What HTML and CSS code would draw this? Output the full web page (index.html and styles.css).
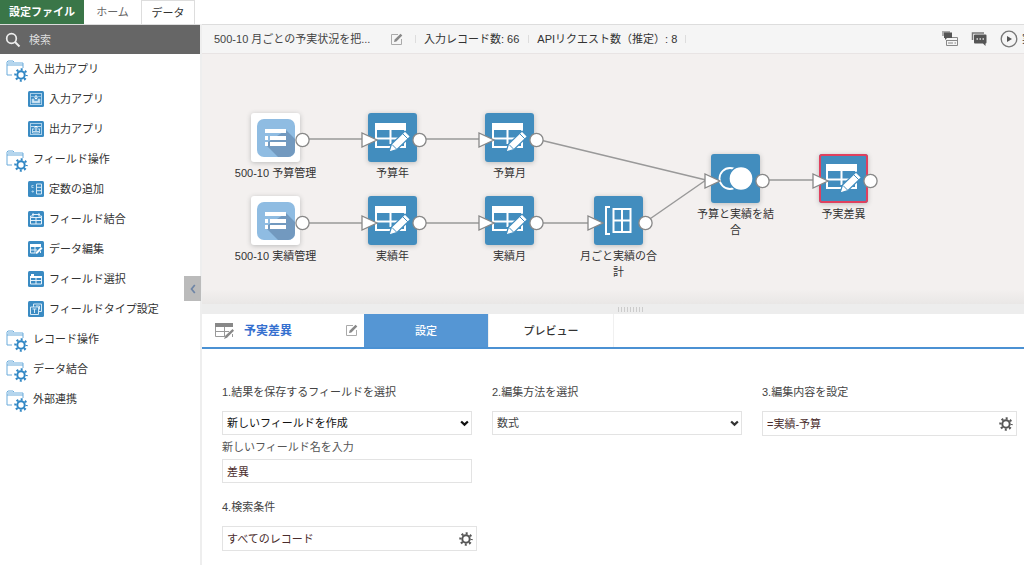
FILE: index.html
```html
<!DOCTYPE html>
<html lang="ja">
<head>
<meta charset="utf-8">
<title>設定ファイル</title>
<link rel="stylesheet" href="styles.css">
</head>
<body>
<svg class="defs" width="0" height="0" aria-hidden="true">
  <symbol id="gear" viewBox="0 0 14 14">
    <circle cx="7" cy="7" r="3.7" fill="none" stroke="currentColor" stroke-width="2"/>
    <circle cx="7" cy="7" r="5.6" fill="none" stroke="currentColor" stroke-width="2.2" stroke-dasharray="2 2.398" stroke-dashoffset="1"/>
  </symbol>
  <symbol id="folder" viewBox="0 0 22 22">
    <path d="M6 15H1V2l1-1h5l2 2h8v5M1 5h16" fill="none" stroke="#6aabdb" stroke-width="1"/>
    <path d="M2 3h14" stroke="#b5d6ee" stroke-width="2"/>
    <circle cx="15" cy="15" r="7" fill="#fff"/>
    <circle cx="15" cy="15" r="3.7" fill="none" stroke="#2e86c4" stroke-width="2"/>
    <circle cx="15" cy="15" r="5.6" fill="none" stroke="#2e86c4" stroke-width="2.2" stroke-dasharray="2 2.398" stroke-dashoffset="1"/>
  </symbol>
  <symbol id="tile" viewBox="0 0 16 16"><rect width="16" height="16" rx="1.5" fill="#3a8bc3"/></symbol>
  <symbol id="input-app" viewBox="0 0 16 16">
    <use href="#tile"/><rect x="2.5" y="2.5" width="11" height="11" fill="none" stroke="#a9d0ea"/>
    <path d="M3 5.5h10M4 8h2v2h4V8h2v4H4z" fill="#d5e9f6" stroke="#a9d0ea" stroke-width=".7"/><path d="M8 4v4M6.500 6.500L8 8.200l1.500-1.700" fill="none" stroke="#fff"/>
  </symbol>
  <symbol id="output-app" viewBox="0 0 16 16">
    <use href="#tile"/><rect x="2.5" y="2.500" width="11" height="11" fill="none" stroke="#a9d0ea"/>
    <path d="M3 5.500h10M4.500 8v4h7V8M4 8h2.500m3 0H12M5 10.500h6" fill="none" stroke="#cfe5f4" stroke-width=".9"/><path d="M8 10V5M6.500 6.500L8 5l1.500 1.500" fill="none" stroke="#fff"/>
  </symbol>
  <symbol id="constant" viewBox="0 0 16 16">
    <use href="#tile"/><path d="M8.500 3h5v10h-5zM8.500 6.300h5M8.500 9.700h5" fill="none" stroke="#d5e9f6"/><path d="M5.500 4.500H3.800v2h1.700M3.500 10.500h2.500M4.750 9.300v2.400" fill="none" stroke="#a9d0ea"/>
  </symbol>
  <symbol id="merge-field" viewBox="0 0 16 16">
    <use href="#tile"/><path d="M2.500 6.500h11v6.500h-11zM2.500 9.500h11M8 6.500V13" fill="none" stroke="#e6f2fa"/><path d="M4 3.500h8M5.500 2.500L4 3.500l1.500 1M10.500 2.500l1.500 1-1.500 1M2.500 6.500V5h3m5 0h3v1.500" fill="none" stroke="#e6f2fa"/>
  </symbol>
  <symbol id="edit-data" viewBox="0 0 16 16">
    <use href="#tile"/><path d="M2 3h11v3H2z" fill="#fff"/><path d="M2.500 6v6H7M2.500 9H9M7 6v6M12.500 10v2" fill="none" stroke="#e6f2fa"/><path d="M7.500 13l.5-2 5-5 1.500 1.500-5 5z" fill="#fff"/>
  </symbol>
  <symbol id="select-field" viewBox="0 0 16 16">
    <use href="#tile"/><path d="M2.500 5.500h11V13h-11zM2.500 9.500h11M8 6.500V13" fill="none" stroke="#e6f2fa"/><path d="M2 5h12v2H2zM3 3h3v2H3z" fill="#fff"/>
  </symbol>
  <symbol id="type-field" viewBox="0 0 16 16">
    <use href="#tile"/><path d="M2.500 6h8v7.500h-8zM5.500 6V3h8v7.500h-3" fill="none" stroke="#d5e9f6"/><path d="M4.500 8h4M6.500 8v4M8 5h3.500v3.500" fill="none" stroke="#d5e9f6"/>
  </symbol>
  <symbol id="pencil-box" viewBox="0 0 13 13">
    <path d="M8 1.500H1.500v10h10V6" fill="none" stroke="#aaa"/><path d="M4 9l.7-2.500L10.500.8l1.800 1.700-5.900 5.900z" fill="#888"/>
  </symbol>
  <symbol id="ports" viewBox="0 0 49 49" overflow="visible">
    <path d="M-6 20v14l15-7z" fill="#fff" stroke="#888" stroke-width="1.300"/>
    <circle cx="51.500" cy="27" r="6.600" fill="#fff" stroke="#888" stroke-width="1.300"/>
  </symbol>
  <symbol id="n-app" viewBox="0 0 49 49">
    <rect x="6" y="6" width="38" height="38" rx="7" fill="#8fbce2"/>
    <path d="M14 31l13 13h10a7 7 0 0 0 7-7V26l-9-9z" fill="#7299bf"/>
    <path d="M14 16h21v4H14zM14 23h3v4h-3zM19 23h16v4H19zM14 29h3v4h-3zM19 29h16v4H19z" fill="#fff"/>
  </symbol>
  <symbol id="n-edit" viewBox="0 0 49 49">
    <path d="M7 10h31v7H7z" fill="#fff"/>
    <path d="M8 17v17h14M8 25.500h25M22.500 17v14M37 17v2M30 34h7v-6" fill="none" stroke="#fff" stroke-width="2"/>
    <path d="M21 39l2.500-8L37 18l5.500 5.500L29 36.500z" fill="#fff" stroke="#428dbe" stroke-width="1.200"/>
    <path d="M34.500 20.500l5.300 5.300M24 31.500l4.500 4.500" stroke="#428dbe" stroke-width="1"/>
  </symbol>
  <symbol id="n-group" viewBox="0 0 49 49">
    <path d="M16 11h-4v27h4M19.500 13h17v23h-17zM19.500 24.500h17M28 13v23" fill="none" stroke="#fff" stroke-width="2"/>
  </symbol>
  <symbol id="n-join" viewBox="0 0 49 49">
    <circle cx="19" cy="24.500" r="10.500" fill="none" stroke="#fff" stroke-width="1.800"/>
    <circle cx="30" cy="24.500" r="12" fill="#fff" stroke="#428dbe" stroke-width="1.300"/>
  </symbol>
</svg>

<nav class="topbar">
  <a class="tab tab-file" href="#">設定ファイル</a>
  <a class="tab tab-home" href="#">ホーム</a>
  <a class="tab tab-data" href="#">データ</a>
</nav>

<div class="layout">
  <aside class="sidebar">
    <label class="search">
      <svg class="search-icon" viewBox="0 0 16 16"><circle cx="6.500" cy="6.500" r="4.800" fill="none" stroke="#eee" stroke-width="1.700"/><path d="M10 10l4.500 4.500" stroke="#eee" stroke-width="2"/></svg>
      <input class="search-input" type="text" placeholder="検索" aria-label="検索">
    </label>
    <ul class="tree">
      <li><a class="group" href="#"><svg class="folder"><use href="#folder"/></svg>入出力アプリ</a></li>
      <li><a class="item" href="#"><svg class="tile"><use href="#input-app"/></svg>入力アプリ</a></li>
      <li><a class="item" href="#"><svg class="tile"><use href="#output-app"/></svg>出力アプリ</a></li>
      <li><a class="group" href="#"><svg class="folder"><use href="#folder"/></svg>フィールド操作</a></li>
      <li><a class="item" href="#"><svg class="tile"><use href="#constant"/></svg>定数の追加</a></li>
      <li><a class="item" href="#"><svg class="tile"><use href="#merge-field"/></svg>フィールド結合</a></li>
      <li><a class="item" href="#"><svg class="tile"><use href="#edit-data"/></svg>データ編集</a></li>
      <li><a class="item" href="#"><svg class="tile"><use href="#select-field"/></svg>フィールド選択</a></li>
      <li><a class="item" href="#"><svg class="tile"><use href="#type-field"/></svg>フィールドタイプ設定</a></li>
      <li><a class="group" href="#"><svg class="folder"><use href="#folder"/></svg>レコード操作</a></li>
      <li><a class="group" href="#"><svg class="folder"><use href="#folder"/></svg>データ結合</a></li>
      <li><a class="group" href="#"><svg class="folder"><use href="#folder"/></svg>外部連携</a></li>
    </ul>
    <button class="collapse" type="button" aria-label="折りたたむ"><svg class="collapse-icon" viewBox="0 0 6 10"><path d="M4.800 1L1.500 5l3.300 4" fill="none" stroke="#6e85a6" stroke-width="1.700"/></svg></button>
  </aside>

  <main class="main">
    <header class="toolbar">
      <span class="flow-name">500-10 月ごとの予実状況を把...</span>
      <button class="icon-button" type="button" aria-label="名前を編集"><svg class="pencil"><use href="#pencil-box"/></svg></button>
      <span class="stat">入力レコード数: 66</span>
      <span class="stat stat-last">APIリクエスト数（推定）: 8</span>
      <div class="actions">
        <button class="icon-button" type="button" aria-label="メモ">
          <svg class="action-icon" viewBox="0 0 16 16"><path d="M0 0h8v5H0z" fill="#aaa"/><path d="M2 1.500h8V7H5L3 9V7H2z" fill="#555"/><path d="M10 6.500h5.500v8h-11V9M4.500 9.500h11M6 12h5M12.500 12H14" fill="none" stroke="#888"/></svg>
        </button>
        <button class="icon-button" type="button" aria-label="コメント">
          <svg class="action-icon" viewBox="0 0 16 16"><path d="M1.500 9V2h11.500" fill="none" stroke="#777" stroke-width="1.500"/><path d="M4 3.500h10.500q1 0 1 1v7q0 1-1 1V15L12 12.500H4q-1 0-1-1v-7q0-1 1-1z" fill="#555"/><path d="M5.500 8h1.500m1.500 0H10m1.500 0H13" stroke="#ddd" stroke-width="1.500"/></svg>
        </button>
        <button class="run" type="button">
          <svg class="run-icon" viewBox="0 0 18 18"><circle cx="9" cy="9" r="7.800" fill="none" stroke="#777" stroke-width="1.300"/><path d="M7 6v6l5-3z" fill="#555"/></svg>実行
        </button>
      </div>
    </header>

    <section class="canvas">
      <svg class="links" aria-hidden="true">
        <path d="M101 85h60M218 85h60M101 169h60M218 169h60M335 169h52M335 85l170 41M443 169l62-43M561 126h52" fill="none" stroke="#999" stroke-width="1.500"/>
      </svg>
      <button class="node pos-plan" type="button">
        <svg class="node-icon node-app"><use href="#n-app"/><circle cx="51.500" cy="27" r="6.600" fill="#fff" stroke="#888" stroke-width="1.300"/></svg>500-10 予算管理</button>
      <button class="node pos-plan-year" type="button"><svg class="node-icon"><use href="#n-edit"/><use href="#ports" width="49" height="49"/></svg>予算年</button>
      <button class="node pos-plan-month" type="button"><svg class="node-icon"><use href="#n-edit"/><use href="#ports" width="49" height="49"/></svg>予算月</button>
      <button class="node pos-actual" type="button">
        <svg class="node-icon node-app"><use href="#n-app"/><circle cx="51.500" cy="27" r="6.600" fill="#fff" stroke="#888" stroke-width="1.300"/></svg>500-10 実績管理</button>
      <button class="node pos-actual-year" type="button"><svg class="node-icon"><use href="#n-edit"/><use href="#ports" width="49" height="49"/></svg>実績年</button>
      <button class="node pos-actual-month" type="button"><svg class="node-icon"><use href="#n-edit"/><use href="#ports" width="49" height="49"/></svg>実績月</button>
      <button class="node pos-sum" type="button"><svg class="node-icon"><use href="#n-group"/><use href="#ports" width="49" height="49"/></svg>月ごと実績の合計</button>
      <button class="node pos-join" type="button"><svg class="node-icon"><use href="#n-join"/><use href="#ports" width="49" height="49"/></svg>予算と実績を結合</button>
      <button class="node pos-diff" type="button"><svg class="node-icon"><rect x="1" y="1" width="47" height="47" rx="2" fill="none" stroke="#e0405e" stroke-width="2"/><use href="#n-edit"/><use href="#ports" width="49" height="49"/></svg>予実差異</button>
    </section>

    <div class="splitter"><span class="grip"></span></div>

    <section class="panel">
      <header class="panel-head">
        <div class="panel-title">
          <svg class="title-icon" viewBox="0 0 20 18"><path d="M1 1h18v4H1z" fill="#888"/><path d="M1.500 5v9.500H11M1.500 9.500H15M10.500 5v9M18.500 12v3" fill="none" stroke="#999"/><path d="M10 17l1.500-3.500 7-6.500 1.500 1.700-7 7z" fill="#888"/></svg>
          <h1 class="title-text">予実差異</h1>
          <button class="icon-button" type="button" aria-label="名前を編集"><svg class="pencil"><use href="#pencil-box"/></svg></button>
        </div>
        <button class="panel-tab active" type="button">設定</button>
        <button class="panel-tab" type="button">プレビュー</button>
      </header>
      <form class="form">
        <div class="column">
          <label class="caption" for="target">1.結果を保存するフィールドを選択</label>
          <div class="select-wrap">
            <select class="control strong" id="target"><option>新しいフィールドを作成</option></select>
            <svg class="chevron" viewBox="0 0 8 6"><path d="M1 1.200l3 2.800 3-2.800" fill="none" stroke="#111" stroke-width="2"/></svg>
          </div>
          <label class="subcaption" for="name">新しいフィールド名を入力</label>
          <input class="control brown" id="name" type="text" value="差異">
          <label class="caption caption-next" for="condition">4.検索条件</label>
          <div class="gear-wrap">
            <input class="gear-input brown" id="condition" type="text" value="すべてのレコード">
            <button class="icon-button gear-button" type="button" aria-label="検索条件を設定"><svg class="gear"><use href="#gear"/></svg></button>
          </div>
        </div>
        <div class="column">
          <label class="caption" for="method">2.編集方法を選択</label>
          <div class="select-wrap">
            <select class="control" id="method"><option>数式</option></select>
            <svg class="chevron" viewBox="0 0 8 6"><path d="M1 1.200l3 2.800 3-2.800" fill="none" stroke="#333" stroke-width="2"/></svg>
          </div>
        </div>
        <div class="column">
          <label class="caption" for="content">3.編集内容を設定</label>
          <div class="gear-wrap">
            <input class="gear-input brown" id="content" type="text" value="=実績-予算">
            <button class="icon-button gear-button" type="button" aria-label="編集内容を設定"><svg class="gear"><use href="#gear"/></svg></button>
          </div>
        </div>
      </form>
    </section>
  </main>
</div>
</body>
</html>
```
FILE: styles.css
```css
* { box-sizing: border-box; }

body {
  margin: 0;
  min-height: 100vh;
  display: flex;
  flex-direction: column;
  overflow-x: hidden;
  background: #fff;
  color: #333;
  font: 11px/16px "Liberation Sans", "Noto Sans CJK JP", sans-serif;
}

button, input, select { font: inherit; color: inherit; }
button { padding: 0; border: 0; background: none; }
a { color: inherit; text-decoration: none; }
svg { display: block; flex: none; }
.defs { position: absolute; }

/* Top tabs */
.topbar { display: flex; height: 24px; }
.tab { display: flex; align-items: center; justify-content: center; }
.tab-file { width: 84px; background: #3a7648; color: #fff; font-weight: bold; }
.tab-home { width: 57px; color: #666; }
.tab-data { width: 54px; border: 1px solid #ddd; border-bottom: 0; }

.layout { flex: 1; display: flex; }

/* Sidebar */
.sidebar { position: relative; flex: 0 0 202px; border-right: 2px solid #eee; }
.search { display: flex; align-items: center; gap: 8px; height: 30px; padding: 0 5px; background: #666; border-top: 1px solid #ddd; }
.search-icon { width: 16px; height: 16px; }
.search-input { flex: 1; min-width: 0; padding: 0; border: 0; outline: 0; background: none; color: #ddd; }
.search-input::placeholder { color: #ddd; opacity: 1; }
.tree { margin: 0; padding: 0; list-style: none; }
.group, .item { display: flex; align-items: center; gap: 5px; height: 30px; }
.group { padding-left: 6px; }
.item { padding-left: 28px; }
.folder { width: 22px; height: 22px; margin-top: 4px; }
.tile { width: 16px; height: 16px; }
.collapse {
  position: absolute;
  right: -1px;
  top: 252px;
  display: flex;
  align-items: center;
  justify-content: center;
  width: 17px;
  height: 25px;
  background: #bbb;
}
.collapse-icon { width: 6px; height: 10px; }

/* Toolbar */
.main { flex: 1; min-width: 0; display: flex; flex-direction: column; }
.toolbar {
  display: flex;
  align-items: center;
  height: 30px;
  padding-left: 12px;
  border-top: 1px solid #ddd;
  border-bottom: 1px solid #e8e4e4;
  background: #f5f5f5;
  overflow: hidden;
  white-space: nowrap;
}
.flow-name { width: 176px; color: #444; }
.icon-button { flex: none; }
.pencil { width: 13px; height: 13px; }
.stat { position: relative; margin-left: 12px; padding: 0 9px; }
.stat::before, .stat-last::after { content: ""; position: absolute; left: 0; top: 4px; width: 1px; height: 8px; background: #ddd; }
.stat-last { margin-left: 0; }
.stat-last::after { left: auto; right: 0; }
.actions { display: flex; align-items: center; gap: 13px; width: 82px; margin-left: auto; }
.action-icon { width: 16px; height: 16px; }
.run { display: flex; align-items: center; gap: 4px; }
.run-icon { width: 18px; height: 18px; }

/* Flow canvas */
.canvas {
  position: relative;
  height: 250px;
  overflow: hidden;
  background: linear-gradient(#f3f0ef 235px, #e9e7e6);
}
.links { position: absolute; left: -1px; top: 0; width: 100%; height: 100%; }
.node {
  position: absolute;
  display: flex;
  flex-direction: column;
  align-items: center;
  gap: 3px;
  width: 85px;
  text-align: center;
}
.node-icon {
  width: 49px;
  height: 49px;
  overflow: visible;
  border-radius: 3px;
  background: #428dbe;
  box-shadow: 0 1px 5px #bbb;
}
.node-app { background: #fff; }
.pos-plan { left: 31px; top: 59px; }
.pos-plan-year { left: 148px; top: 59px; }
.pos-plan-month { left: 265px; top: 59px; }
.pos-actual { left: 31px; top: 142px; }
.pos-actual-year { left: 148px; top: 142px; }
.pos-actual-month { left: 265px; top: 142px; }
.pos-sum { left: 374px; top: 142px; }
.pos-join { left: 491px; top: 100px; }
.pos-diff { left: 599px; top: 100px; }

/* Settings panel */
.splitter { display: flex; align-items: center; justify-content: center; height: 10px; padding-left: 36px; background: #ededed; }
.grip { width: 27px; height: 5px; background: repeating-linear-gradient(90deg, #ccc 0 1px, #ededed 1px 3px); }
.panel-head { display: flex; height: 35px; border-bottom: 2px solid #4b91d3; }
.panel-title { display: flex; align-items: center; width: 162px; padding: 0 6px 0 12px; }
.title-icon { width: 20px; height: 18px; }
.title-text { flex: 1; margin: 0 0 0 10px; color: #3570cf; font-size: 12px; }
.panel-tab { width: 125px; border-right: 1px solid #f0f0f0; font-weight: 500; }
.active { background: #5596d4; color: #fff; }

.form {
  display: grid;
  grid-template-columns: repeat(3, minmax(0, 1fr));
  gap: 20px;
  padding: 35px 12px 12px 20px;
  color: #444;
}
.column { display: flex; flex-direction: column; }
.caption { margin-bottom: 11px; }
.subcaption { margin: 4px 0; color: #555; }
.caption-next { margin-top: 16px; }
.select-wrap { position: relative; }
.control, .gear-wrap { width: 100%; height: 24px; border: 1px solid #e3e3e3; background: #fff; }
.control { display: block; padding: 0 4px; border-radius: 0; appearance: none; }
.strong { color: #111; }
.brown { color: #4a2c2c; }
.chevron { position: absolute; right: 3px; top: 9px; width: 9px; height: 7px; pointer-events: none; }
.gear-wrap { display: flex; align-items: center; width: calc(100% + 5px); height: 25px; padding: 0 3px 0 4px; }
.gear-input { flex: 1; min-width: 0; padding: 0; border: 0; outline: 0; background: none; }
.gear { width: 14px; height: 14px; color: #555; }
```
